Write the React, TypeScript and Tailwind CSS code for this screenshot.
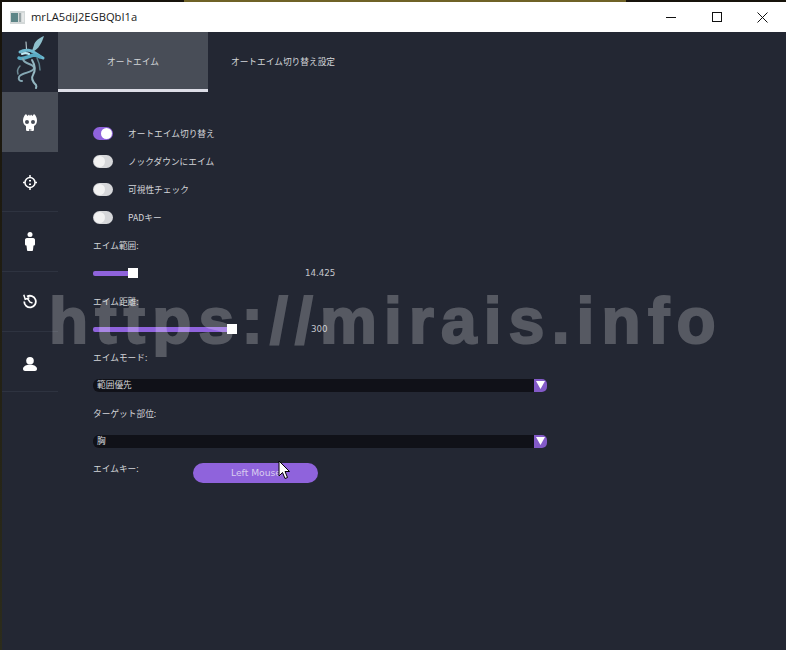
import React from 'react';

const jp = "font-['Noto_Sans_CJK_JP','Noto_Sans',sans-serif]";

const Toggle = ({ on, label }: { on?: boolean; label: string }) => (
  <div className="flex h-[28px] items-center">
    <div className={`flex h-[13px] w-[20px] items-center rounded-full px-[1px] ${on ? 'justify-end bg-[#8f63dc]' : 'justify-start bg-[#d6d7da]'}`}>
      <div className={`h-[11px] w-[11px] rounded-full ${on ? 'bg-white' : 'bg-[#f2f2f2]'}`} />
    </div>
    <span className="ml-[15px] pt-[2px] text-[8.7px] text-[#d3d5d9]">{label}</span>
  </div>
);

const Label = ({ children }: { children: React.ReactNode }) => (
  <div className="flex h-[28px] items-center pt-[2px] text-[8.7px] text-[#d3d5d9]">{children}</div>
);

const Slider = ({ fill, value, gap }: { fill: string; value: string; gap: string }) => (
  <div className="flex h-[28px] items-center">
    <div className={`h-[5px] rounded-l-[2px] bg-[#8f63dc] ${fill}`} />
    <div className="h-[10px] w-[10px] bg-white" />
    <span className={`pt-[2px] text-[8.7px] text-[#c4c6cb] font-['DejaVu_Sans',sans-serif] ${gap}`}>{value}</span>
  </div>
);

const Select = ({ value }: { value: string }) => (
  <div className="flex h-[28px] items-center">
    <div className="flex h-[13px] w-[454px] items-center rounded-[6px] bg-[#101118] pl-[4px]">
      <span className="flex-1 text-[8.7px] text-[#d3d5d9]">{value}</span>
      <div className="flex h-[13px] w-[13px] items-center justify-center rounded-r-[5px] bg-[#835ac8]">
        <svg width="9" height="8" viewBox="0 0 9 8"><path d="M0 0h9L4.500 8z" fill="#fff" /></svg>
      </div>
    </div>
  </div>
);

const SideItem = ({ active, children }: { active?: boolean; children: React.ReactNode }) => (
  <div className={`flex h-[60px] items-center justify-center ${active ? 'bg-[#484d57]' : 'border-b border-[#2e3340]'}`}>
    {children}
  </div>
);

export default function App() {
  return (
    <div className={`relative h-[650px] w-[786px] overflow-hidden bg-gradient-to-b from-[#17130b] to-[#2c2c1c] pl-[2px] pt-[2px] ${jp}`}>
      <div className="absolute left-[184px] top-0 h-[2px] w-[442px] bg-[#6f6226]" />
      <div className="flex h-[648px] flex-col bg-[#232733]">
        {/* title bar */}
        <div className="flex h-[30px] shrink-0 items-center bg-white pl-[8px]">
          <svg width="15" height="13" viewBox="0 0 15 13" className="shrink-0">
            <rect width="15" height="13" fill="#d3d8d8" />
            <rect x="1" y="2" width="7" height="9" fill="#5d8587" />
            <rect x="9" y="2" width="2" height="9" fill="#9aa5a7" />
            <rect x="12" y="2" width="2" height="9" fill="#e4e7e7" />
          </svg>
          <span className="ml-[6px] flex-1 text-[11.2px] text-[#1a1a1a] font-['Open_Sans',sans-serif]">mrLA5diJ2EGBQbI1a</span>
          <div className="flex h-full items-center">
            <div className="flex w-[46px] justify-center">
              <svg width="10" height="10" viewBox="0 0 10 10"><path d="M0 5.500h10" stroke="#111" /></svg>
            </div>
            <div className="flex w-[46px] justify-center">
              <svg width="10" height="10" viewBox="0 0 10 10"><rect x=".5" y=".5" width="9" height="9" fill="none" stroke="#111" /></svg>
            </div>
            <div className="flex w-[46px] justify-center pr-[2px]">
              <svg width="11" height="11" viewBox="0 0 11 11"><path d="M.5.5l10 10M10.500.5l-10 10" stroke="#111" /></svg>
            </div>
          </div>
        </div>

        <div className="flex min-h-0 flex-1">
          {/* sidebar */}
          <div className="w-[56px] shrink-0">
            <div className="flex h-[60px] items-center justify-center">
              <svg width="32" height="56" viewBox="0 0 32 56" fill="none" strokeLinecap="round">
                <path d="M30 2c-5 2-9 5-10 9-1 3-2 6-3 8 3-2 7-4 9-8 2-3 3-6 4-9z" fill="#8fc0cc" />
                <path d="M12 8l.5 8" stroke="#c9dde2" strokeWidth="1" />
                <path d="M6 18c5-3 12-2 15 1 3 2 6 4 8 5" stroke="#6fb9d0" strokeWidth="3" />
                <path d="M5 24c4 2 10-2 15-3 2 0 4 1 6 2" stroke="#58a9c2" strokeWidth="3.500" />
                <path d="M8 20c2-1 5-1 7 0" stroke="#bfeaf5" strokeWidth="2" />
                <path d="M9 25c1 6 11 4 11 9 0 5-13 4-15 9-1 3 1 4 3 4" stroke="#86a8b4" strokeWidth="2" />
                <path d="M6 32c-2 2-3 5-2 8" stroke="#6d8a94" strokeWidth="1.500" />
                <path d="M18 26c3 5 4 10 1 15-2 3 0 7 3 10 .5 1 .5 2 0 3" stroke="#95b8c2" strokeWidth="2" />
                <path d="M23 24c2 4 3 8 3 12" stroke="#5d7f8b" strokeWidth="1.500" />
              </svg>
            </div>
            <SideItem active>
              <svg width="14" height="18" viewBox="0 0 14 18" className="mt-[1px]">
                <path fill="#fff" fillRule="evenodd" d="M3 0l1.500 2L6 .5 7 2 8 .5 9.500 2 11 0c2 1.500 3 4 3 6.500 0 2.500-1 4.500-3 5.500v3.500c0 1-.7 1.500-1.500 1.500h-5C3.700 17 3 16.500 3 15.500V12C1 11 0 9 0 6.500 0 4 1 1.500 3 0zM4 6a2 2 0 1 0 0 4 2 2 0 0 0 0-4zM10 6a2 2 0 1 0 0 4 2 2 0 0 0 0-4zM6 15v2h.7v-2zM7.500 15v2h.7v-2z" />
              </svg>
            </SideItem>
            <SideItem>
              <svg width="14" height="15" viewBox="0 0 14 15" fill="none" stroke="#fff" className="mt-[1px]">
                <circle cx="7" cy="7.500" r="5" strokeWidth="1.500" />
                <path d="M7 0v2.500M7 12.500V15M0 7.500h2M12 7.500h2" strokeWidth="1.500" />
                <path d="M7 5v1.500M7 8.500V10" strokeWidth="2" />
              </svg>
            </SideItem>
            <SideItem>
              <svg width="10" height="19" viewBox="0 0 10 19" fill="#fff">
                <circle cx="5" cy="2.500" r="2.500" />
                <path d="M2 6h6c1.500 0 2 1 2 2v4c0 1-.5 1.500-1.500 1.500L8 18c0 1-1 1-1.500 1h-3C3 19 2 19 2 18l-.5-4.500C.5 13.500 0 13 0 12V8c0-1 .5-2 2-2z" />
              </svg>
            </SideItem>
            <SideItem>
              <svg width="14" height="15" viewBox="0 0 14 15" fill="none" stroke="#fff" strokeWidth="1.800">
                <path d="M4 2.600A5.800 5.800 0 1 1 1.200 7.500" />
                <path d="M.8.800l1.400 4.400 4.200-1.400" strokeWidth="1.500" />
                <path d="M4.500 4.500L7 8.200l2.500.8" strokeWidth="1.500" />
              </svg>
            </SideItem>
            <SideItem>
              <svg width="14" height="14" viewBox="0 0 14 14" fill="#fff" className="mt-[4px]">
                <circle cx="7" cy="3.800" r="3.800" />
                <path d="M0 12c0-2.500 3-3.800 5-4.200h4c2 .4 5 1.700 5 4.200 0 1-1 2-2 2H2c-1 0-2-1-2-2z" />
              </svg>
            </SideItem>
          </div>

          {/* content */}
          <div className="min-w-0 flex-1">
            <div className="flex h-[60px]">
              <div className="flex w-[150px] items-center justify-center border-b-[3px] border-[#dcdde6] bg-[#484d57] pt-[2px] text-[8.7px] text-[#d3d5d9]">オートエイム</div>
              <div className="flex w-[150px] items-center justify-center pb-[1px] text-[8.7px] text-[#d3d5d9]">オートエイム切り替え設定</div>
            </div>
            <div className="pl-[35px] pt-[27px]">
              <Toggle on label="オートエイム切り替え" />
              <Toggle label="ノックダウンにエイム" />
              <Toggle label="可視性チェック" />
              <Toggle label="PADキー" />
              <Label>エイム範囲:</Label>
              <Slider fill="w-[35px]" value="14.425" gap="ml-[167px]" />
              <Label>エイム距離:</Label>
              <Slider fill="w-[134px]" value="300" gap="ml-[74px]" />
              <Label>エイムモード:</Label>
              <Select value="範囲優先" />
              <Label>ターゲット部位:</Label>
              <Select value="胸" />
              <div className="flex h-[28px] items-start">
                <span className="mt-[7px] w-[100px] text-[8.7px] text-[#d3d5d9]">エイムキー:</span>
                <div className="mt-[8px] flex h-[20px] w-[125px] items-center justify-center rounded-full bg-[#8f63dc] pl-[1px] text-[9.2px] text-[#d9cdf0] font-['DejaVu_Sans',sans-serif]">
                  Left Mouse
                </div>
              </div>
            </div>
          </div>
        </div>
      </div>

      {/* watermark */}
      <div className="pointer-events-none absolute left-[49px] top-[283px] whitespace-nowrap text-[64px] leading-[76px] font-bold tracking-[7.2px] text-white opacity-[0.23] [-webkit-text-stroke:2px_white] font-['Liberation_Sans',sans-serif]">
        https://mirais.info
      </div>

      {/* mouse cursor */}
      <svg className="pointer-events-none absolute left-[278px] top-[460px]" width="13" height="21" viewBox="0 0 13 21">
        <path d="M1 1v15l3.500-3.500 2.500 6 2.500-1-2.500-6H11.500z" fill="#fff" stroke="#000" strokeWidth="1" />
      </svg>
    </div>
  );
}
